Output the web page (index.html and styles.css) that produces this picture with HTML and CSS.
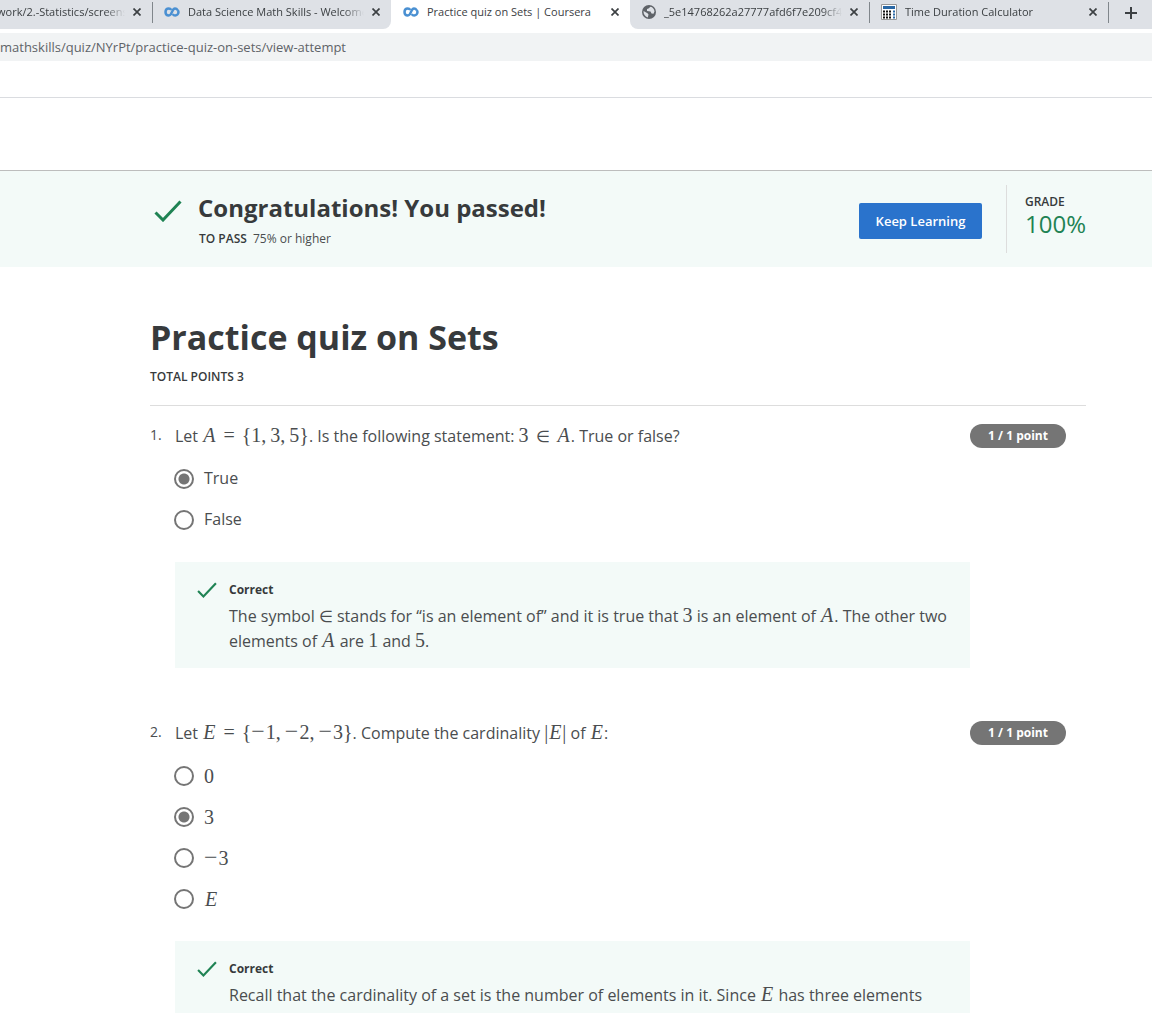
FILE: index.html
```html
<!DOCTYPE html>
<html lang="en">
<head>
<meta charset="utf-8">
<title>Practice quiz on Sets | Coursera</title>
<link rel="stylesheet" href="styles.css">
</head>
<body>
<svg class="defs" width="0" height="0" aria-hidden="true">
  <symbol id="infinity" viewBox="0 0 16 10"><path d="M13.6 3.1C12.9 1.9 12 1.5 11 1.5C7.5 1.5 8.500 8.500 4.800 8.500C2.900 8.500 1.500 7 1.500 5S2.900 1.500 4.800 1.500C6 1.500 6.700 2 7.300 2.900M8.700 7.100C9.300 8 10 8.500 11.200 8.500C13 8.500 14.500 7 14.500 5C14.500 4.200 14.200 3.600 13.600 3.100" fill="none" stroke="#4a90d2" stroke-width="2.500"/></symbol>
  <symbol id="close" viewBox="0 0 8 8"><path d="M0.500 0.500L7.500 7.500M7.500 0.500L0.500 7.500" stroke="#3c4043" stroke-width="1.700"/></symbol>
  <symbol id="check" viewBox="0 0 28 22"><path d="M1.500 12.500L9 20L26.500 1.500" fill="none" stroke="#1f8354" stroke-width="3"/></symbol>
</svg>
<div class="window">
  <header class="chrome">
    <nav class="tabs">
      <div class="tab tab-cut"><a class="tab-name" href="#">work/2.-Statistics/screenshots</a><button class="close" aria-label="Close tab"><svg><use href="#close"/></svg></button></div>
      <div class="tab line"><svg class="brand"><use href="#infinity"/></svg><a class="tab-name" href="#">Data Science Math Skills - Welcome</a><button class="close" aria-label="Close tab"><svg><use href="#close"/></svg></button></div>
      <div class="tab active"><svg class="brand"><use href="#infinity"/></svg><a class="tab-name" href="#">Practice quiz on Sets | Coursera</a><button class="close" aria-label="Close tab"><svg><use href="#close"/></svg></button></div>
      <div class="tab"><svg class="globe" viewBox="0 0 14 14"><circle cx="7" cy="7" r="7" fill="#5f6368"/><path d="M1.500 6L5.500 8.200L6.500 9.500L5.800 12.500C3 11.800 1.300 9 1.500 6ZM8.500 1.700L6.500 3.500L5 4L5 6L8.500 6.500L9.500 8.500L11.500 8.800L12.500 6.500C12.300 4 10.800 2.200 8.500 1.700Z" fill="#dee1e6"/></svg><a class="tab-name" href="#">_5e14768262a27777afd6f7e209cf4</a><button class="close" aria-label="Close tab"><svg><use href="#close"/></svg></button></div>
      <div class="tab line"><svg class="calc" viewBox="0 0 16 16"><path d="M.5.5h15v15H.5z" fill="#fff" stroke="#999"/><path d="M2 2h12v3H2z" fill="#2a68a5"/><path d="M2 7.500h9M2 10.500h9M2 13.500h9" stroke="#111" stroke-width="2" stroke-dasharray="2 1"/><path d="M12 7.500h2M12 10.500h2M12 13.500h2" stroke="#2a68a5" stroke-width="2"/></svg><a class="tab-name" href="#">Time Duration Calculator</a><button class="close" aria-label="Close tab"><svg><use href="#close"/></svg></button></div>
      <button class="new-tab line" aria-label="New tab"><svg viewBox="0 0 12 12"><path d="M6 0v12M0 6h12" stroke="#3c4043" stroke-width="2"/></svg></button>
    </nav>
    <input class="address" aria-label="Address" value="mathskills/quiz/NYrPt/practice-quiz-on-sets/view-attempt">
    <div class="bookmarks"></div>
  </header>
  <div class="page">
    <div class="site-bar"></div>
    <section class="banner">
      <svg class="check-big"><use href="#check"/></svg>
      <div class="result">
        <h2>Congratulations! You passed!</h2>
        <p><b>TO PASS</b> <span>75% or higher</span></p>
      </div>
      <button class="keep">Keep Learning</button>
      <div class="grade"><b>GRADE</b><span>100%</span></div>
    </section>
    <main>
      <h1>Practice quiz on Sets</h1>
      <p class="total">TOTAL POINTS 3</p>
      <section class="question">
        <span class="number">1.</span>
        <div class="body">
          <p class="prompt">Let <span class="m"><i>A</i><span class="rel">=</span>{1,<span class="thin"></span>3,<span class="thin"></span>5}</span>. Is the following statement: <span class="m">3<span class="rel in">∈</span><i>A</i></span>. True or false?</p>
          <label><input type="radio" name="q1" checked>True</label>
          <label><input type="radio" name="q1">False</label>
          <div class="feedback">
            <svg class="check-small"><use href="#check"/></svg>
            <div><h3>Correct</h3>
            <p>The symbol <span class="m in">∈</span> stands for “is an element of” and it is true that <span class="m">3</span> is an element of <span class="m"><i>A</i></span>. The other two elements of <span class="m"><i>A</i></span> are <span class="m">1</span> and <span class="m">5</span>.</p></div>
          </div>
        </div>
        <span class="points">1 / 1 point</span>
      </section>
      <section class="question">
        <span class="number">2.</span>
        <div class="body">
          <p class="prompt">Let <span class="m"><i>E</i><span class="rel">=</span>{<span class="neg">−</span>1,<span class="thin"></span><span class="neg">−</span>2,<span class="thin"></span><span class="neg">−</span>3}</span>. Compute the cardinality <span class="m">|<i>E</i>|</span> of <span class="m"><i>E</i></span>:</p>
          <label><input type="radio" name="q2"><span class="m">0</span></label>
          <label><input type="radio" name="q2" checked><span class="m">3</span></label>
          <label><input type="radio" name="q2"><span class="m"><span class="neg">−</span>3</span></label>
          <label><input type="radio" name="q2"><span class="m"><i>E</i></span></label>
          <div class="feedback">
            <svg class="check-small"><use href="#check"/></svg>
            <div><h3>Correct</h3>
            <p>Recall that the cardinality of a set is the number of elements in it. Since <span class="m"><i>E</i></span> has three elements</p></div>
          </div>
        </div>
        <span class="points">1 / 1 point</span>
      </section>
    </main>
  </div>
</div>
</body>
</html>
```
FILE: styles.css
```css
* { box-sizing: border-box; }
body { margin: 0; background: #fff; color: #373a3c; font: 16px/25px "Open Sans", "Noto Sans", sans-serif; }
h1, h2, h3, p { margin: 0; }
button { border: 0; background: none; padding: 0; font: inherit; }
svg { display: block; flex: none; }
.defs { position: absolute; }
.window { height: 100vh; display: flex; flex-direction: column; overflow: hidden; }

.chrome { flex: none; border-bottom: 1px solid #dadce0; }
.tabs { display: flex; height: 29px; background: #fff; font-size: 11px; line-height: 16px; }
.tab { flex: 0 1 239px; display: flex; align-items: center; gap: 8px; min-width: 0; padding: 0 11px 5px 12px; background: #dee1e6; position: relative; }
.tab-cut { flex-basis: 152px; padding-left: 0; }
.tab-cut .tab-name { margin-left: -3px; }
.tab.active { background: #fff; }
.tab:has(+ .active) { border-bottom-right-radius: 8px; }
.active + .tab { border-bottom-left-radius: 8px; }
.line::before { content: ""; position: absolute; left: 0; top: 2px; height: 21px; width: 1px; background: #80868b; }
.tab-name { flex: 1; overflow: hidden; white-space: nowrap; color: #3c4043; text-decoration: none; -webkit-mask-image: linear-gradient(to left, transparent, #000 20px); mask-image: linear-gradient(to left, transparent, #000 20px); }
.active .tab-name { -webkit-mask-image: none; mask-image: none; }
.close svg { width: 8px; height: 8px; }
.brand { width: 16px; height: 10px; }
.globe { width: 14px; height: 14px; }
.calc { width: 16px; height: 16px; }
.new-tab { flex: 1; position: relative; background: #dee1e6; padding: 0 0 4px 17px; }
.new-tab svg { width: 12px; height: 12px; }
.address { display: block; width: 100%; height: 28px; margin-top: 4px; padding: 0; border: 0; background: #f1f3f4; color: #5f6368; font: 13px/28px "Open Sans", sans-serif; }
.bookmarks { height: 36px; }

.page { flex: 1; overflow: hidden; }
.site-bar { height: 73px; border-bottom: 1px solid #bdbdbd; }
.banner { display: flex; align-items: center; height: 96px; padding: 0 66px 0 154px; background: #f3faf8; }
.check-big { width: 28px; height: 22px; margin-bottom: 16px; }
.result { flex: 1; margin: 2px 0 0 16px; }
.result h2 { font-size: 24px; line-height: 30px; font-weight: 700; }
.result p { margin: 7px 0 0 1px; font-size: 12px; line-height: 18px; }
.result p span { margin-left: 3px; color: #4a4d4f; }
b { font-weight: 600; }
.keep { width: 123px; height: 36px; margin: 4px 24px 0 0; border-radius: 2px; background: #2a73cc; color: #fff; font-size: 13px; font-weight: 600; }
.grade { display: flex; flex-direction: column; width: 80px; height: 68px; padding: 9px 0 0 18px; border-left: 1px solid #ddd; }
.grade b { font-size: 12px; line-height: 16px; }
.grade span { font-size: 24px; line-height: 28px; color: #1f8354; }

main { margin: 0 66px 0 150px; }
h1 { padding-top: 46px; font-size: 34px; line-height: 48px; font-weight: 700; }
.total { padding: 7px 0 19px; border-bottom: 1px solid #ddd; font-size: 12px; line-height: 18px; font-weight: 600; }
.question { display: flex; padding-right: 20px; margin: 18px 0 53px; color: #4a4d4f; }
.number { width: 25px; font-size: 14px; line-height: 22px; }
.body { flex: 1; }
.prompt { line-height: 24px; margin-bottom: 10px; }
.m { font-family: "Liberation Serif", serif; font-size: 20px; line-height: 1; }
.m i { margin: 0 1px; }
.rel { margin: 0 7px; }
.in, .m.in { font-size: 16px; line-height: 0; }
.neg { font-size: 24px; line-height: 0; margin-right: 1px; }
.thin { margin-left: 4px; }
label { display: flex; align-items: center; height: 41px; }
input[type="radio"] { appearance: none; width: 20px; height: 20px; margin: 0 10px 0 -1px; border: 2px solid #757575; border-radius: 50%; background: #fff; }
input[type="radio"]:checked { background: radial-gradient(circle, #757575 5px, #fff 6px); }
.feedback { display: flex; gap: 12px; margin-top: 22px; padding: 19px 20px 14px 22px; background: #f3faf8; }
.check-small { width: 20px; height: 16px; margin-top: 1px; }
.feedback h3 { font-size: 12px; line-height: 18px; font-weight: 700; margin-bottom: 5px; color: #373a3c; }
.points { align-self: flex-start; width: 96px; height: 24px; border-radius: 12px; background: #757575; color: #fff; font-size: 12px; line-height: 24px; font-weight: 700; text-align: center; }
```
